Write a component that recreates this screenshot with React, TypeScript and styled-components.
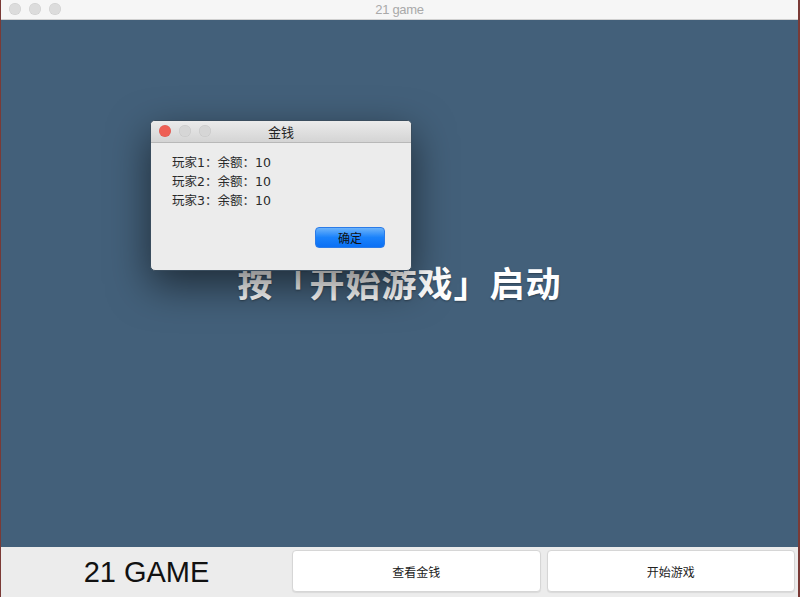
import styled, { createGlobalStyle } from 'styled-components';

const GlobalStyle = createGlobalStyle`
	html, body {
		margin: 0;
		padding: 0;
		background: #7a3a36;
	}
	body {
		font-family: 'Liberation Sans', 'Noto Sans CJK SC', sans-serif;
	}
`;

const Window = styled.div`
	position: relative;
	display: flex;
	flex-direction: column;
	width: 797px;
	height: 597px;
	margin-left: 1px;
	background: #ececec;
	overflow: hidden;
`;

const TitleBar = styled.div`
	position: relative;
	display: flex;
	align-items: center;
	justify-content: center;
	height: 19px;
	background: #f6f6f6;
	border-bottom: 1px solid #d0d0d0;
	flex-shrink: 0;
`;

const Lights = styled.div`
	position: absolute;
	left: 8px;
	top: 3px;
	display: flex;
	gap: 8px;
`;

const Light = styled.span<{ $color?: string }>`
	width: 12px;
	height: 12px;
	border-radius: 50%;
	background: ${(p) => p.$color || '#dcdcdc'};
	box-shadow: inset 0 0 0 0.5px rgba(0, 0, 0, 0.08);
`;

const WindowTitle = styled.span`
	font-size: 13px;
	color: #a9a9a9;
	letter-spacing: -0.3px;
`;

const Stage = styled.div`
	flex: 1;
	display: flex;
	align-items: center;
	justify-content: center;
	background: #43607a;
`;

const Prompt = styled.div`
	font-family: 'Noto Sans CJK SC', sans-serif;
	font-size: 35px;
	font-weight: 700;
	color: #ffffff;
	letter-spacing: 1px;
	margin-top: -5px;
	text-shadow: 0 1px 2px rgba(0, 0, 0, 0.35);
`;

const BottomBar = styled.div`
	display: flex;
	align-items: stretch;
	height: 50px;
	padding: 3px 3px 5px 0;
	gap: 6px;
	box-sizing: border-box;
	background: #ececec;
	flex-shrink: 0;
`;

const Brand = styled.div`
	width: 285px;
	display: flex;
	align-items: center;
	justify-content: center;
	font-size: 29px;
	color: #111;
	padding: 2px 0 0 6px;
	box-sizing: border-box;
`;

const BarButton = styled.button`
	flex: 1;
	background: #ffffff;
	border: 1px solid #d6d6d6;
	border-radius: 4px;
	font-family: 'Noto Sans CJK SC', sans-serif;
	font-size: 12px;
	color: #222;
	box-shadow: 0 1px 1px rgba(0, 0, 0, 0.08);
`;

const Dialog = styled.div`
	position: absolute;
	left: 149px;
	top: 120px;
	width: 262px;
	height: 151px;
	display: flex;
	flex-direction: column;
	background: #ececec;
	border-radius: 5px;
	border: 1px solid #3a4d5e;
	box-sizing: border-box;
	overflow: hidden;
	box-shadow: 0 14px 40px rgba(0, 0, 0, 0.55);
`;

const DialogHeader = styled.div`
	position: relative;
	display: flex;
	align-items: center;
	justify-content: center;
	height: 21px;
	background: linear-gradient(#ebebeb, #d4d4d4);
	border-bottom: 1px solid #b8b8b8;
`;

const DialogLights = styled(Lights)`
	left: 8px;
	top: 4px;
`;

const DialogTitle = styled.span`
	font-family: 'Noto Sans CJK SC', sans-serif;
	font-size: 13px;
	color: #222;
`;

const DialogBody = styled.div`
	flex: 1;
	display: flex;
	flex-direction: column;
	padding: 10px 26px 0 21px;
`;

const Line = styled.div`
	font-family: 'DejaVu Sans', 'Noto Sans CJK SC', sans-serif;
	font-size: 12.5px;
	line-height: 19px;
	color: #2a2a2a;
`;

const Actions = styled.div`
	display: flex;
	justify-content: flex-end;
	margin-top: 17px;
`;

const OkButton = styled.button`
	width: 70px;
	height: 21px;
	border: 1px solid #2a7be8;
	border-radius: 4px;
	background: linear-gradient(#6cb3fa, #1a82fb 50%, #0b70f5);
	font-family: 'Noto Sans CJK SC', sans-serif;
	font-size: 12px;
	color: #111;
	padding: 0;
`;

const players = [1, 2, 3].map((n) => ({ name: `玩家${n}`, money: 10 }));

const App = () => (
	<>
		<GlobalStyle />
		<Window>
			<TitleBar>
				<Lights>
					<Light />
					<Light />
					<Light />
				</Lights>
				<WindowTitle>21 game</WindowTitle>
			</TitleBar>
			<Stage>
				<Prompt>按「开始游戏」启动</Prompt>
			</Stage>
			<BottomBar>
				<Brand>21 GAME</Brand>
				<BarButton>查看金钱</BarButton>
				<BarButton>开始游戏</BarButton>
			</BottomBar>
			<Dialog>
				<DialogHeader>
					<DialogLights>
						<Light $color='#ee5f55' />
						<Light $color='#d6d6d6' />
						<Light $color='#d6d6d6' />
					</DialogLights>
					<DialogTitle>金钱</DialogTitle>
				</DialogHeader>
				<DialogBody>
					{players.map((p) => (
						<Line key={p.name}>
							{p.name}：余额：{p.money}
						</Line>
					))}
					<Actions>
						<OkButton>确定</OkButton>
					</Actions>
				</DialogBody>
			</Dialog>
		</Window>
	</>
);

export default App;
